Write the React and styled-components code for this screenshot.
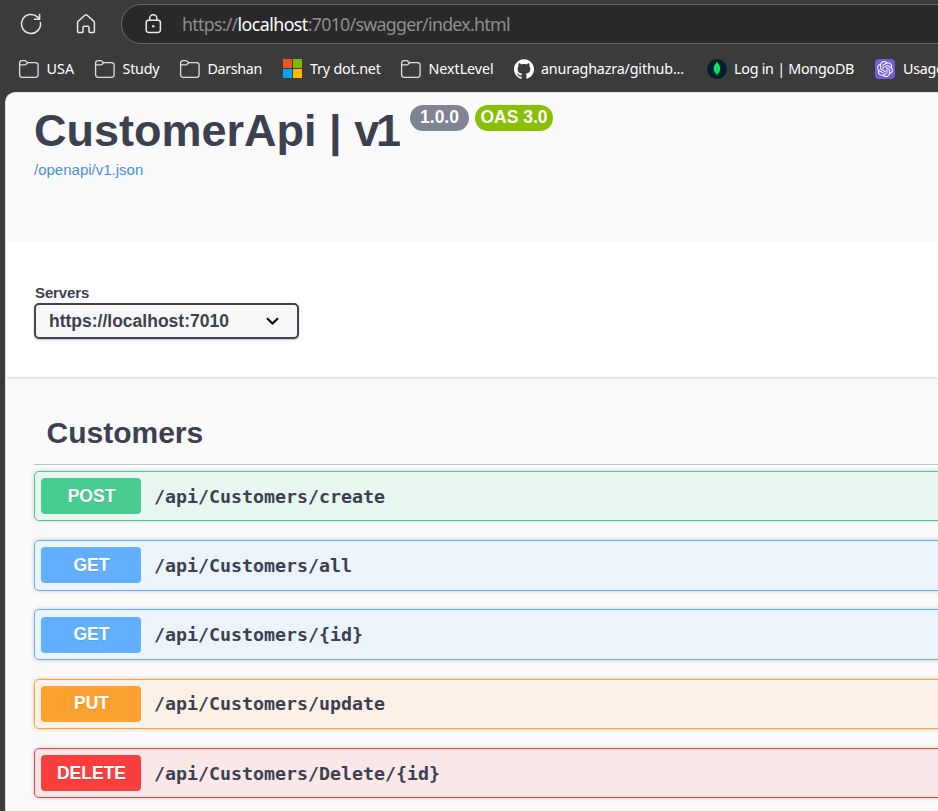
import React from "react";
import styled, { createGlobalStyle } from "styled-components";
import { SiGithub, SiOpenai } from "react-icons/si";

const GlobalStyle = createGlobalStyle`
  html, body { margin: 0; padding: 0; height: 811px; overflow: hidden; background: #3b3b3b; }
  * { box-sizing: border-box; }
`;

const ui = `"Noto Sans", "Segoe UI", sans-serif`;
const sans = `"Liberation Sans", Arial, sans-serif`;

const Browser = styled.div`
  width: 938px;
  height: 811px;
  overflow: hidden;
  display: flex;
  flex-direction: column;
  background: #3b3b3b;
`;

const Toolbar = styled.div`
  height: 48px;
  flex: none;
  display: flex;
  align-items: center;
  padding: 0 0 0 19px;
`;

const ToolButton = styled.div`
  width: 24px;
  height: 24px;
  margin-right: ${(p) => p.$gap}px;
  color: #e6e6e6;
  svg { display: block; }
`;

const AddressBar = styled.div`
  width: 900px;
  flex: none;
  height: 40px;
  display: flex;
  align-items: center;
  border: 1px solid #666;
  border-radius: 20px;
  background: #292929;
  padding-left: 20px;
`;

const Url = styled.div`
  margin: -1px 0 0 17px;
  font: 17.8px/24px ${ui};
  letter-spacing: -0.72px;
  color: #8f8f8f;
  white-space: nowrap;
  b { font-weight: 400; color: #fff; letter-spacing: -0.55px; }
`;

const Bookmarks = styled.div`
  height: 44px;
  flex: none;
  display: flex;
  align-items: center;
  padding: 0 0 2px 18px;
`;

const Bookmark = styled.div`
  flex: none;
  width: ${(p) => p.$width}px;
  display: flex;
  align-items: center;
  gap: ${(p) => p.$gap || 7.5}px;
  color: #fff;
  svg { flex: none; }
`;

const BookmarkLabel = styled.span`
  font: 14.3px/20px ${ui};
  letter-spacing: ${(p) => p.$spacing || 0}px;
  white-space: nowrap;
`;

const Page = styled.main`
  flex: 1;
  margin-left: 5px;
  border-top: 1px solid #dedede;
  border-left: 1px solid #dedede;
  border-top-left-radius: 10px;
  overflow: hidden;
  background: #fafafa;
  color: #3b4151;
  font-family: ${sans};
`;

const Info = styled.header`
  height: 149px;
  padding: 12px 0 0 28px;
`;

const TitleRow = styled.div`
  height: 56px;
  display: flex;
  align-items: flex-start;
`;

const Title = styled.h1`
  margin: 0;
  width: 376px;
  font-size: 45px;
  line-height: 52px;
  font-weight: 700;
  white-space: nowrap;
`;

const Kerned = styled.span`
  letter-spacing: -3.2px;
`;

const Pill = styled.span`
  width: ${(p) => p.$width}px;
  height: 26px;
  margin-right: 6px;
  border-radius: 13px;
  background: ${(p) => p.$color};
  color: #fff;
  font-size: 17.5px;
  line-height: 25px;
  font-weight: 700;
  text-align: center;
`;

const SpecLink = styled.a`
  display: block;
  font-size: 15px;
  line-height: 18px;
  color: #4990e2;
`;

const ServerPanel = styled.section`
  height: 135px;
  padding: 42px 0 0 28px;
  background: #fff;
  box-shadow: 0 1px 2px rgba(0, 0, 0, 0.15);
`;

const ServerLabel = styled.div`
  padding-left: 1px;
  height: 19px;
  font-size: 15px;
  line-height: 18px;
  font-weight: 700;
  letter-spacing: -0.12px;
`;

const Select = styled.div`
  width: 265px;
  height: 36px;
  display: flex;
  align-items: center;
  justify-content: space-between;
  padding: 0 18px 0 13px;
  border: 2px solid #41444e;
  border-radius: 5px;
  background: #f7f7f7;
  box-shadow: 0 1px 2px rgba(0, 0, 0, 0.25);
  font-size: 17.5px;
  font-weight: 700;
`;

const Operations = styled.section`
  padding-left: 28px;
`;

const TagHeading = styled.h2`
  width: 930px;
  height: 88px;
  margin: 0 0 5.9px;
  padding: 38px 0 0 12.5px;
  border-bottom: 1px solid rgba(59, 65, 81, 0.3);
  font-size: 30px;
  line-height: 35px;
  font-weight: 700;
`;

const Operation = styled.div`
  width: 930px;
  height: 50.5px;
  margin-bottom: 18.75px;
  display: flex;
  align-items: center;
  padding: 0 6px;
  border: 1px solid ${(p) => p.$color};
  border-radius: 5px;
  background: ${(p) => p.$tint};
  box-shadow: 0 0 4px rgba(0, 0, 0, 0.19);
`;

const Method = styled.div`
  width: 100px;
  height: 36px;
  display: flex;
  justify-content: center;
  align-items: flex-start;
  border-radius: 4px;
  background: ${(p) => p.$color};
  padding-left: 1px;
`;

const MethodName = styled.span`
  margin-top: -0.5px;
  color: #fff;
  font-size: 17.5px;
  line-height: 36px;
  font-weight: 700;
  text-shadow: 0 1px 0 rgba(0, 0, 0, 0.1);
`;

const Path = styled.code`
  margin-left: 13px;
  padding-top: 1px;
  font: 700 18.27px/24px "DejaVu Sans Mono", monospace;
  white-space: nowrap;
`;

const Reload = () => (
  <svg width="24" height="24" viewBox="0 0 24 24" fill="none" stroke="currentColor" strokeWidth="1.5" strokeLinecap="round" strokeLinejoin="round">
    <path d="M21.4 10.4A9.5 9.5 0 1 1 18.6 5.1L20.6 7.3M20.6 2.4V7.3H15.4" />
  </svg>
);

const Home = () => (
  <svg width="24" height="24" viewBox="0 0 24 24" fill="none" stroke="currentColor" strokeWidth="1.5" strokeLinejoin="round">
    <path d="M3.6 10.6Q3.6 9.7 4.3 9.1L10.9 3.2Q12 2.3 13.1 3.2L19.7 9.1Q20.4 9.7 20.4 10.6V19.4Q20.4 20.6 19.2 20.6H16.2Q15 20.6 15 19.4V15.5Q15 14.2 13.7 14.2H10.3Q9 14.2 9 15.5V19.4Q9 20.6 7.8 20.6H4.8Q3.6 20.6 3.6 19.4Z" />
  </svg>
);

const Lock = () => (
  <svg width="23" height="24" viewBox="0 0 23 24" fill="none" stroke="#e9e9e9" strokeWidth="1.5">
    <rect x="4.2" y="8.2" width="14.2" height="12.2" rx="2.3" />
    <path d="M7.7 8V6.3a3.6 3.6 0 0 1 7.2 0V8" />
    <circle cx="11.3" cy="14.2" r="1.2" fill="#e9e9e9" stroke="none" />
  </svg>
);

const Folder = () => (
  <svg width="21" height="20" viewBox="0 0 21 20" fill="none" stroke="#dedede" strokeWidth="1.3" strokeLinejoin="round">
    <path d="M1.6 4.2Q1.6 1.7 4.1 1.7H6.7Q7.5 1.7 8 2.2L9.7 3.7H17.4Q20.1 3.7 20.1 6.3V15.5Q20.1 18.4 17.4 18.4H4.2Q1.6 18.4 1.6 15.5ZM1.6 5.9H6.8Q7.6 5.9 8.1 5.3L9.7 3.7" />
  </svg>
);

const Microsoft = () => (
  <svg width="20" height="20" viewBox="0 0 20 20">
    <rect x="1" y="0" width="9" height="9" fill="#f4511e" />
    <rect x="11" y="0" width="9" height="9" fill="#7fba00" />
    <rect x="1" y="10" width="9" height="9" fill="#00a4ef" />
    <rect x="11" y="10" width="9" height="9" fill="#ffb900" />
  </svg>
);

const Mongo = () => (
  <svg width="20" height="20" viewBox="0 0 20 20">
    <circle cx="10" cy="10" r="10" fill="#001e2b" />
    <path d="M9.9 2.6C10.7 4.5 13.4 6.2 13.2 10.1C13.1 12.8 11.3 14.5 10.3 15.2L10.2 17.1H9.7L9.5 15.2C8.3 14.3 6.8 12.7 6.7 10.1C6.6 6.5 9.1 4.8 9.9 2.6Z" fill="#00ed64" />
    <path d="M10 8V16" stroke="#00a34a" strokeWidth="0.5" />
  </svg>
);

const Tile = styled.span`
  width: 20px;
  height: 20px;
  flex: none;
  display: flex;
  align-items: center;
  justify-content: center;
  border-radius: 4px;
  background: #735cdd;
`;

const OpenAi = () => (
  <Tile>
    <SiOpenai size={16} color="#fff" />
  </Tile>
);

const Chevron = () => (
  <svg width="13" height="8" viewBox="0 0 13 8" fill="none" stroke="#000" strokeWidth="2">
    <path d="M1 1.2L6.5 6.5L12 1.2" />
  </svg>
);

const bookmarks = [
  { label: "USA", icon: <Folder />, width: 76, spacing: 0.1 },
  { label: "Study", icon: <Folder />, width: 85, spacing: -0.2 },
  { label: "Darshan", icon: <Folder />, width: 103, spacing: -0.36 },
  { label: "Try dot.net", icon: <Microsoft />, width: 118, gap: 8, spacing: -0.18 },
  { label: "NextLevel", icon: <Folder />, width: 114, spacing: -0.05 },
  { label: "anuraghazra/github...", icon: <SiGithub size={20} />, width: 193, gap: 7, spacing: -0.16 },
  { label: "Log in | MongoDB", icon: <Mongo />, width: 168, gap: 7, spacing: -0.25 },
  { label: "Usage", icon: <OpenAi />, width: 90, gap: 8, spacing: -0.3 },
];

const operations = [
  { method: "POST", path: "/api/Customers/create", color: "#49cc90", tint: "#e8f6f0" },
  { method: "GET", path: "/api/Customers/all", color: "#61affe", tint: "#ebf3fb" },
  { method: "GET", path: "/api/Customers/{id}", color: "#61affe", tint: "#ebf3fb" },
  { method: "PUT", path: "/api/Customers/update", color: "#fca130", tint: "#fbf1e6" },
  { method: "DELETE", path: "/api/Customers/Delete/{id}", color: "#f93e3e", tint: "#fae7e7" },
];

export default function App() {
  return (
    <Browser>
      <GlobalStyle />
      <Toolbar>
        <ToolButton $gap={31}><Reload /></ToolButton>
        <ToolButton $gap={23}><Home /></ToolButton>
        <AddressBar>
          <Lock />
          <Url>https://<b>localhost</b>:7010/swagger/index.html</Url>
        </AddressBar>
      </Toolbar>
      <Bookmarks>
        {bookmarks.map((b) => (
          <Bookmark key={b.label} $width={b.width} $gap={b.gap}>
            {b.icon}
            <BookmarkLabel $spacing={b.spacing}>{b.label}</BookmarkLabel>
          </Bookmark>
        ))}
      </Bookmarks>
      <Page>
        <Info>
          <TitleRow>
            <Title>CustomerApi | <Kerned>v</Kerned>1</Title>
            <Pill $width={59} $color="#7d8492">1.0.0</Pill>
            <Pill $width={78} $color="#89bf04">OAS 3.0</Pill>
          </TitleRow>
          <SpecLink>/openapi/v1.json</SpecLink>
        </Info>
        <ServerPanel>
          <ServerLabel>Servers</ServerLabel>
          <Select>
            https://localhost:7010
            <Chevron />
          </Select>
        </ServerPanel>
        <Operations>
          <TagHeading>Customers</TagHeading>
          {operations.map((o) => (
            <Operation key={o.path} $color={o.color} $tint={o.tint}>
              <Method $color={o.color}><MethodName>{o.method}</MethodName></Method>
              <Path>{o.path}</Path>
            </Operation>
          ))}
        </Operations>
      </Page>
    </Browser>
  );
}
